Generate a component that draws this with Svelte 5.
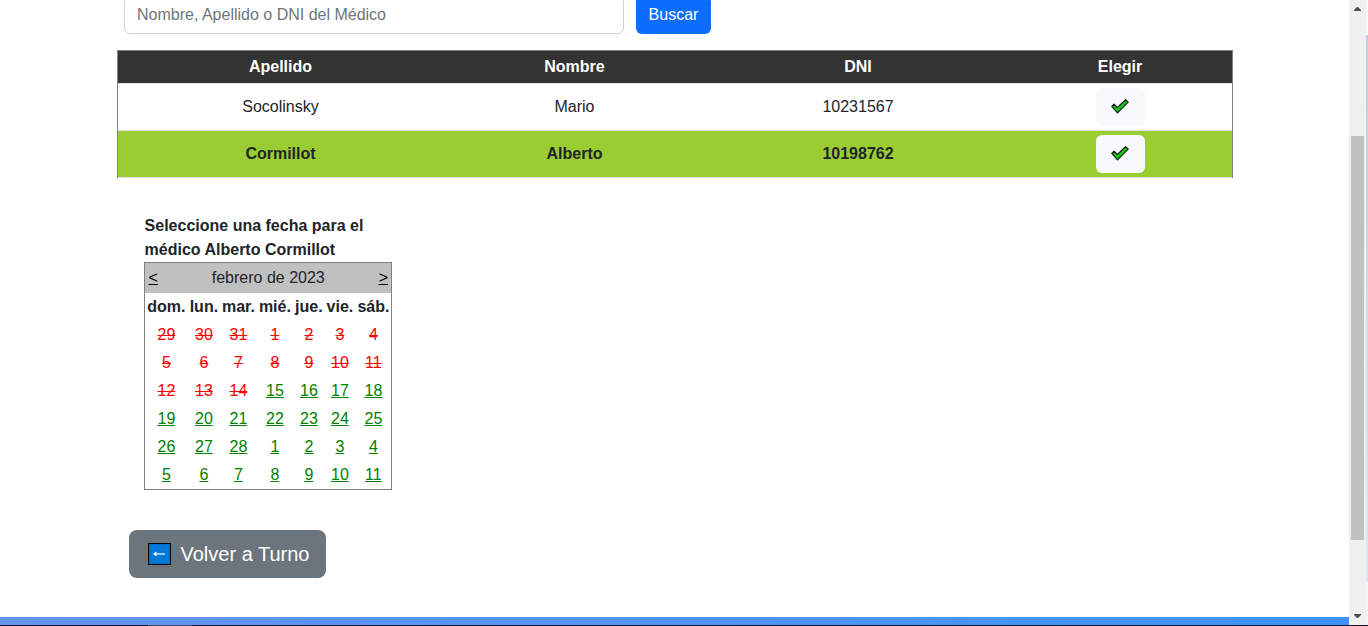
<script>
  const doctors = [
    { last: 'Socolinsky', first: 'Mario', dni: '10231567', selected: false },
    { last: 'Cormillot', first: 'Alberto', dni: '10198762', selected: true }
  ];
  const weekdays = ['dom.', 'lun.', 'mar.', 'mié.', 'jue.', 'vie.', 'sáb.'];
  const dates = [
    29, 30, 31, 1, 2, 3, 4, 5, 6, 7, 8, 9, 10, 11, 12, 13, 14,
    15, 16, 17, 18, 19, 20, 21, 22, 23, 24, 25, 26, 27, 28,
    1, 2, 3, 4, 5, 6, 7, 8, 9, 10, 11
  ];
  const unavailable = 17;
</script>

<div class="window">
  <div class="page">
    <main>
      <form class="search" onsubmit={(e) => e.preventDefault()}>
        <input type="text" placeholder="Nombre, Apellido o DNI del Médico" />
        <button class="primary">Buscar</button>
      </form>

      <div class="doctors">
        <div class="row head">
          <span>Apellido</span><span>Nombre</span><span>DNI</span><span>Elegir</span>
        </div>
        {#each doctors as d}
          <div class="row" class:selected={d.selected}>
            <span>{d.last}</span><span>{d.first}</span><span>{d.dni}</span>
            <span>
              <button class="pick" aria-label="Elegir">
                <svg width="18" height="15" viewBox="0 0 18 15">
                  <path d="M.8 7.4 3 5.3 6.4 8.5 14.6.7 17.2 3.1 6.5 13.9Z" fill="#16c60c" stroke="#1a1a1a" stroke-width="1.2" stroke-linejoin="round" />
                </svg>
              </button>
            </span>
          </div>
        {/each}
      </div>

      <section class="schedule">
        <p>Seleccione una fecha para el médico Alberto Cormillot</p>
        <div class="calendar">
          <div class="title"><a href="#prev">&lt;</a><span>febrero de 2023</span><a href="#next">&gt;</a></div>
          <div class="grid">
            {#each weekdays as w}<b>{w}</b>{/each}
            {#each dates as n, i}
              <span><a class="day" class:off={i < unavailable} href="#day">{n}</a></span>
            {/each}
          </div>
        </div>
      </section>

      <button class="back">
        <svg width="23" height="22" viewBox="0 0 23 22">
          <rect x=".5" y=".5" width="22" height="21" fill="#0078d7" stroke="#000" stroke-width="1.2" />
          <path d="M7 11H17" stroke="#fff" stroke-width="1.2" />
          <path d="M5 11 8.5 8.6V13.4Z" fill="#fff" />
        </svg>
        <span>Volver a Turno</span>
      </button>
    </main>
    <footer></footer>
  </div>
  <div class="scrollbar">
    <svg width="7" height="4" viewBox="0 0 7 4"><path d="M0 4V3L3 0H4L7 3V4Z" fill="#505050" /></svg>
    <div class="thumb"></div>
    <svg class="down" width="7" height="4" viewBox="0 0 7 4"><path d="M0 0V1L3 4H4L7 1V0Z" fill="#505050" /></svg>
  </div>
  <div class="edge"><i></i><i></i><i></i></div>
  <div class="bottom"></div>
</div>

<style>
  :global(body) { margin: 0; overflow: hidden; }
  .window, .window * { box-sizing: border-box; }
  .window {
    display: grid; grid-template: 625px 1px / 1349px 17px 2px;
    width: 1368px; height: 626px; background: #fff; color: #212529;
    font: 16px/24px "Liberation Sans", Arial, sans-serif; overflow: hidden;
  }
  .page { display: flex; flex-direction: column; min-height: 0; overflow: hidden; }
  main { flex: none; height: 617px; padding-left: 117px; }
  .search { display: flex; gap: 12px; margin-top: -4px; padding-left: 7px; }
  button { border: 0; font: inherit; }
  input {
    width: 500px; height: 38px; padding: 6px 12px; font: inherit;
    border: 1px solid #ced4da; border-radius: 6px; background: #fff;
  }
  input::placeholder { color: #6c757d; opacity: 1; }
  .primary { width: 75px; height: 38px; padding: 0; border-radius: 6px; background: #0d6efd; color: #fff; }
  .doctors { width: 1116px; margin-top: 16px; border: 1px solid #808080; border-bottom: 0; }
  .row {
    display: grid; grid-template-columns: 325px 263px 304px 220px; height: 47px;
    align-items: center; text-align: center; border-bottom: 1px solid #dee2e6;
  }
  .row.head { height: 33px; background: #333; color: #fff; font-weight: bold; }
  .row.selected { background: #9acd32; font-weight: bold; }
  .row > span { display: flex; justify-content: center; }
  .pick {
    display: flex; align-items: center; justify-content: center; width: 49px; height: 38px;
    padding: 0 1px 1px 0; background: #f8f9fa; border-radius: 6px;
  }
  .schedule { width: 248px; margin: 36px 0 0 27px; }
  p { margin: 0; padding-left: .6px; font-weight: bold; }
  .calendar { height: 228px; border: 1px solid #808080; }
  .title { display: flex; justify-content: space-between; height: 30px; padding: 3px 3px 3px 3.5px; background: #c0c0c0; }
  .title a { color: #000; }
  .grid { display: grid; grid-template-columns: 42px 33px 36px 37px 31px 31px 36px; grid-auto-rows: 28px; padding-left: .4px; text-align: center; line-height: 27px; }
  .grid b { display: flex; justify-content: center; }
  .day { color: green; text-decoration: underline; }
  .day.off { color: red; text-decoration: line-through; }
  .back {
    display: flex; align-items: center; gap: 9.5px; width: 197px; height: 48px; margin: 40px 0 0 12px;
    padding: 0 0 0 19px; border-radius: 8px; background: #6c757d; color: #fff; font-size: 20px;
    white-space: nowrap;
  }
  footer { height: 8px; background: linear-gradient(90deg, #6495ed, #3e92fb); }
  .scrollbar { display: flex; flex-direction: column; align-items: center; padding-top: 7px; background: #f0f0f0; }
  .scrollbar svg { flex: none; }
  .thumb { width: 13px; height: 404px; margin-top: 125px; background: #c1c1c1; }
  .down { margin-top: 74px; }
  .edge { display: grid; grid-template-rows: 35px 547px 43px; }
  .edge i:nth-child(1) { background: #f8f8f8; }
  .edge i:nth-child(2) { background: linear-gradient(#c3cde1, #dce6f4); }
  .edge i:nth-child(3) { background: #f4f4f4; }
  .bottom { grid-column: 1 / -1; background: linear-gradient(90deg, #11131f 148px, #444a58 148px 192px, #11131f 192px); }
</style>
